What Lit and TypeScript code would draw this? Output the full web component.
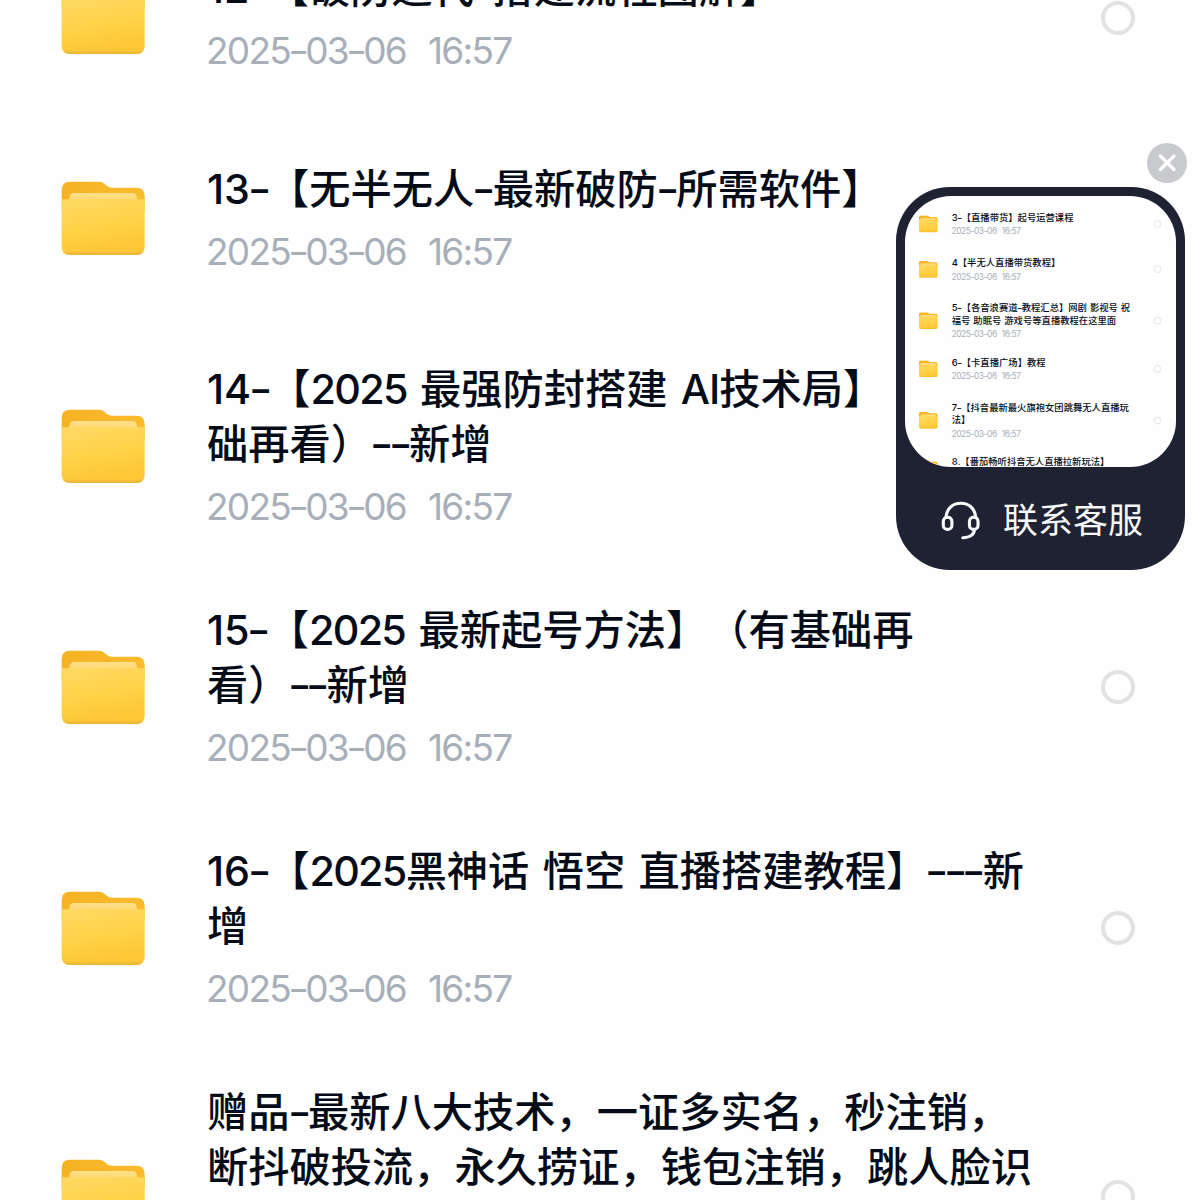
import { LitElement, html, css, svg } from "lit";
import { customElement, property } from "lit/decorators.js";
import { classMap } from "lit/directives/class-map.js";

interface Entry {
  lines: string[];
  rows?: number;
}

const STAMP = { day: "2025-03-06", time: "16:57" };

const MAIN: Entry[] = [
  { lines: ["12-【破防迭代-搭建流程图解】"] },
  { lines: ["13-【无半无人-最新破防-所需软件】"] },
  { lines: ["14-【2025 最强防封搭建 AI技术局】（有基", "础再看）--新增"] },
  { lines: ["15-【2025 最新起号方法】（有基础再", "看）--新增"] },
  { lines: ["16-【2025黑神话 悟空 直播搭建教程】---新", "增"] },
  { lines: ["赠品-最新八大技术，一证多实名，秒注销，", "断抖破投流，永久捞证，钱包注销，跳人脸识"], rows: 3 },
];

const PREVIEW: Entry[] = [
  { lines: ["3-【直播带货】起号运营课程"] },
  { lines: ["4【半无人直播带货教程】"] },
  { lines: ["5-【各音浪赛道-教程汇总】网剧 影视号 祝", "福号 助眠号 游戏号等直播教程在这里面"] },
  { lines: ["6-【卡直播广场】教程"] },
  { lines: ["7-【抖音最新最火旗袍女团跳舞无人直播玩", "法】"] },
  { lines: ["8.【番茄畅听抖音无人直播拉新玩法】"] },
];

@customElement("folder-icon")
export class FolderIcon extends LitElement {
  static styles = css`
    :host { display: block; width: 86px; height: 77px; }
    svg { display: block; width: 100%; height: 100%; }
  `;
  render() {
    return html`<svg viewBox="60 58 258 231">
      ${svg`
      <defs>
        <linearGradient id="back" x1="0" y1="0" x2="1" y2="0">
          <stop offset="0" stop-color="#f5b324" /><stop offset="1" stop-color="#fabb2c" />
        </linearGradient>
        <linearGradient id="front" x1="0" y1="0" x2="0.25" y2="1">
          <stop offset="0" stop-color="#ffd964" /><stop offset="0.6" stop-color="#ffd145" /><stop offset="1" stop-color="#fdc736" />
        </linearGradient>
        <linearGradient id="rim" x1="0" y1="0" x2="0" y2="1">
          <stop offset="0.93" stop-color="#dcab38" stop-opacity="0" /><stop offset="1" stop-color="#dcab38" />
        </linearGradient>
        <linearGradient id="paper" x1="0" y1="0" x2="0" y2="1">
          <stop offset="0" stop-color="#ffe08a" /><stop offset="1" stop-color="#ffd970" />
        </linearGradient>
      </defs>
      <path fill="url(#back)" d="M65 150V88Q65 63 90 63H176Q187 63 194 70L201 76Q206 81 216 81H289Q314 81 314 106V150Z" />
      <path fill="url(#paper)" d="M88 122V113Q88 97 104 97H275Q291 97 291 113V122Z" />
      <path fill="url(#front)" d="M65 116H314V258Q314 283 289 283H90Q65 283 65 258Z" />
      <path fill="url(#rim)" opacity=".7" d="M65 116H314V258Q314 283 289 283H90Q65 283 65 258Z" />`}
    </svg>`;
  }
}

@customElement("file-list")
export class FileList extends LitElement {
  @property({ attribute: false }) entries: Entry[] = [];

  static styles = css`
    :host { display: block; width: 1200px; }
    .row {
      display: grid;
      grid-template-columns: 86px 1fr 34px;
      align-items: center;
      padding: 0 65px 0 60px;
      column-gap: 61px;
      margin-bottom: 85.5px;
      height: 115px;
    }
    .row.two { height: 170px; margin-bottom: 71px; }
    .row.three { height: 225px; }
    .text { align-self: start; white-space: nowrap; min-width: 0; margin-top: -2px; }
    .line {
      height: 55px;
      line-height: 55px;
      font-family: "Noto Sans CJK SC", sans-serif;
      font-size: 41.25px;
      font-weight: 500;
      color: #050c18;
      text-spacing-trim: space-all;
      font-kerning: none;
      word-spacing: 4px;
    }
    .latin { font-family: Inter, "Liberation Sans", sans-serif; letter-spacing: -0.2px; }
    .latin.year { letter-spacing: -1.7px; }
    .latin.word { letter-spacing: -1px; }
    .dash {
      display: inline-block;
      font-family: Inter, "Liberation Sans", sans-serif;
      line-height: 1;
      transform: scaleX(1.25);
    }
    .line .dash { width: 18.5px; text-align: center; }
    .spacer { height: 55px; }
    .date {
      display: flex;
      gap: 22px;
      font-family: Inter, "Liberation Sans", sans-serif;
      font-size: 37px;
      font-weight: 400;
      letter-spacing: -1.75px;
      line-height: 45px;
      margin: 15px 0 0 -1px;
      color: #a8afb9;
    }
    .ring {
      box-sizing: border-box;
      width: 34px;
      height: 34px;
      border: 4.5px solid #e2e2e3;
      border-radius: 50%;
    }
  `;

  private runs(text: string) {
    const parts = text.match(/-|[\x21-\x2c\x2e-\x7e]+|[^\x21-\x7e]+/g) ?? [];
    return parts.map((p) => {
      if (p === "-") return html`<span class="dash">-</span>`;
      if (!/^[\x21-\x7e]/.test(p)) return html`<span>${p}</span>`;
      return html`<span class=${classMap({ latin: true, year: p.length === 4, word: /[A-Z]/.test(p) })}>${p}</span>`;
    });
  }

  render() {
    return this.entries.map((e) => {
      const n = e.rows ?? e.lines.length;
      return html`<div class=${classMap({ row: true, two: n === 2, three: n === 3 })}>
        <folder-icon></folder-icon>
        <div class="text">
          ${e.lines.map((l) => html`<div class="line">${this.runs(l)}</div>`)}
          ${n > e.lines.length ? html`<div class="spacer"></div>` : null}
          <div class="date"><span>${STAMP.day.split("-").map((d, i) => html`${i ? html`<span class="dash">-</span>` : null}${d}`)}</span><span>${STAMP.time}</span></div>
        </div>
        <div class="ring"></div>
      </div>`;
    });
  }
}

@customElement("support-card")
export class SupportCard extends LitElement {
  static styles = css`
    :host { display: block; width: 289px; height: 383px; }
    .card {
      box-sizing: border-box;
      height: 100%;
      padding: 9px;
      border-radius: 54px;
      background: #1f2232;
      display: flex;
      flex-direction: column;
    }
    .screen {
      width: 271px;
      height: 271px;
      flex: none;
      border-radius: 46px;
      background: #fefefe;
      overflow: hidden;
    }
    .scaled {
      display: block;
      padding-top: 66px;
      transform: scale(0.2258);
      transform-origin: 0 0;
    }
    .action {
      flex: 1;
      display: flex;
      align-items: center;
      padding: 8px 0 0 35px;
      gap: 20px;
      color: #f6f7f9;
      font: 400 35px/44px "Noto Sans CJK SC", sans-serif;
      white-space: nowrap;
    }
    .headset { width: 43px; height: 43px; flex: none; margin-top: 4px; }
  `;
  render() {
    return html`<div class="card">
      <div class="screen"><file-list class="scaled" .entries=${PREVIEW}></file-list></div>
      <div class="action">
        <svg class="headset" viewBox="180 445 130 130" fill="none" stroke="#f6f7f9" stroke-width="9.5" stroke-linecap="round">
          <path d="M198 500C200 474 219 458 243 458S286 474 288 500" />
          <rect x="190" y="500" width="26" height="37" rx="13" />
          <rect x="269" y="500" width="26" height="37" rx="13" />
          <path d="M284 538C283 554 272 561 249 562" />
        </svg>
        <span>联系客服</span>
      </div>
    </div>`;
  }
}

@customElement("app-root")
export class AppRoot extends LitElement {
  static styles = css`
    :host { display: block; }
    .page {
      position: relative;
      width: 1200px;
      height: 1200px;
      overflow: hidden;
      background: #fefefe;
    }
    .list { margin-top: -40px; }
    .floating { position: absolute; left: 896px; top: 187px; }
    .close { position: absolute; left: 1147px; top: 143px; width: 40px; height: 40px; }
  `;
  render() {
    return html`<div class="page">
      <file-list class="list" .entries=${MAIN}></file-list>
      <support-card class="floating"></support-card>
      <svg class="close" viewBox="0 0 40 40">
        <circle cx="20" cy="20" r="20" fill="#c9cacd" />
        <path d="M13.5 13L27 26.5M27 13L13.5 26.5" stroke="#fff" stroke-width="3.2" stroke-linecap="round" />
      </svg>
    </div>`;
  }
}
